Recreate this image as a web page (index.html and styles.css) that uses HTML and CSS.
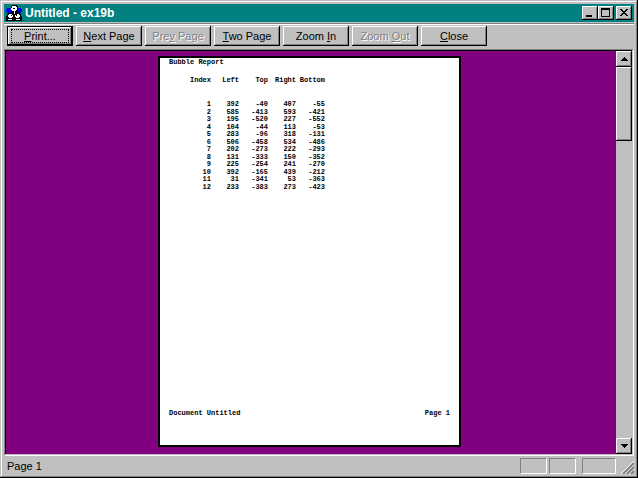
FILE: index.html
```html
<!DOCTYPE html>
<html lang="en">
<head>
<meta charset="utf-8">
<title>Untitled - ex19b</title>
<link rel="stylesheet" href="styles.css">
</head>
<body>
<div class="window">
  <header class="titlebar">
    <svg class="app-icon" viewBox="0 0 16 16" shape-rendering="crispEdges" aria-hidden="true">
      <path fill="#0000ff" d="M1 3h4v1h1v4H3v1H2V8H1V7H0V4h1zM11 3h4v1h1v3h-1v1h-1v1h-1V8h-3V4h1z"/>
      <path fill="#000" d="M5 1h1V0h5v1h1v6h2v2h1v2h1v5H0v-5h1V9h1V8h3z"/>
      <path fill="#fff" d="M6 1h4v1h1v3h-1v1H9v3H8V6H6V5H5V3h1zM3 9h3v1h1v2H6v1H3v-1H2v-2h1zM11 9h2v1h1v2h-1v1h-3v-1H9v-2h2zM2 14h4v1H2zM10 14h4v1h-4z"/>
      <path fill="#000" d="M7 3h2v1H7zM5 10h1v1H5zM10 10h1v1h-1z"/>
    </svg>
    <h1 class="title">Untitled - ex19b</h1>
    <div class="captions">
      <button class="caption bevel" aria-label="Minimize"><svg viewBox="0 0 12 10" shape-rendering="crispEdges"><path d="M2 7h6v2H2z"/></svg></button>
      <button class="caption bevel" aria-label="Maximize"><svg viewBox="0 0 12 10" shape-rendering="crispEdges"><path fill-rule="evenodd" d="M1 0h9v9H1zM2 2v6h7V2z"/></svg></button>
      <button class="caption bevel close" aria-label="Close window"><svg viewBox="0 0 12 10" shape-rendering="crispEdges"><path d="M2 1h2v1h1v1h2V2h1V1h2v1H9v1H8v1H7v1h1v1h1v1h1v1H8V7H7V6H5v1H4v1H2V7h1V6h1V5h1V4H4V3H3V2H2z"/></svg></button>
    </div>
  </header>
  <nav class="toolbar">
    <button class="tool bevel default"><span class="focus"><u>P</u>rint...</span></button>
    <button class="tool bevel"><u>N</u>ext Page</button>
    <button class="tool bevel" disabled>Pre<u>v</u> Page</button>
    <button class="tool bevel"><u>T</u>wo Page</button>
    <button class="tool bevel">Zoom <u>I</u>n</button>
    <button class="tool bevel" disabled>Zoom <u>O</u>ut</button>
    <button class="tool bevel"><u>C</u>lose</button>
  </nav>
  <main class="view">
    <div class="canvas">
      <article class="page">
        <h2 class="report-title">Bubble Report</h2>
        <table class="report">
          <colgroup><col class="c-index"><col class="c-odd"><col class="c-even"><col class="c-odd"><col class="c-even"></colgroup>
          <thead><tr><th>Index</th><th>Left</th><th>Top</th><th>Right</th><th>Bottom</th></tr></thead>
          <tbody>
            <tr><td>1</td><td>392</td><td>-40</td><td>407</td><td>-55</td></tr>
            <tr><td>2</td><td>585</td><td>-413</td><td>593</td><td>-421</td></tr>
            <tr><td>3</td><td>195</td><td>-520</td><td>227</td><td>-552</td></tr>
            <tr><td>4</td><td>104</td><td>-44</td><td>113</td><td>-53</td></tr>
            <tr><td>5</td><td>283</td><td>-96</td><td>318</td><td>-131</td></tr>
            <tr><td>6</td><td>506</td><td>-458</td><td>534</td><td>-486</td></tr>
            <tr><td>7</td><td>202</td><td>-273</td><td>222</td><td>-293</td></tr>
            <tr><td>8</td><td>131</td><td>-333</td><td>150</td><td>-352</td></tr>
            <tr><td>9</td><td>225</td><td>-254</td><td>241</td><td>-270</td></tr>
            <tr><td>10</td><td>392</td><td>-165</td><td>439</td><td>-212</td></tr>
            <tr><td>11</td><td>31</td><td>-341</td><td>53</td><td>-363</td></tr>
            <tr><td>12</td><td>233</td><td>-383</td><td>273</td><td>-423</td></tr>
          </tbody>
        </table>
        <footer class="page-footer"><span>Document Untitled</span><span>Page 1</span></footer>
      </article>
    </div>
    <div class="scrollbar">
      <button class="arrow bevel" aria-label="Scroll up"><svg viewBox="0 0 7 4" shape-rendering="crispEdges"><path d="M3 0h1v1h1v1h1v1h1v1H0V3h1V2h1V1h1z"/></svg></button>
      <div class="thumb bevel"></div>
      <button class="arrow bevel last" aria-label="Scroll down"><svg viewBox="0 0 7 4" shape-rendering="crispEdges"><path d="M0 0h7v1H6v1H5v1H4v1H3V3H2V2H1V1H0z"/></svg></button>
    </div>
  </main>
  <footer class="status">
    <span class="status-text">Page 1</span>
    <span class="pane"></span>
    <span class="pane"></span>
    <span class="pane wide"></span>
    <svg class="grip" viewBox="0 0 13 13" aria-hidden="true">
      <path stroke="#fff" d="M0 13L13 0M4 13l9-9M8 13l5-5"/>
      <path stroke="#808080" stroke-width="2" d="M2 13L13 2M6 13l7-7M10 13l3-3"/>
    </svg>
  </footer>
</div>
</body>
</html>
```
FILE: styles.css
```css
* { box-sizing: border-box; }

body {
  margin: 0;
  background: #c0c0c0;
  color: #000;
  font: 11px/14px "Liberation Sans", Arial, sans-serif;
}

button {
  margin: 0;
  padding: 0;
  border: 0;
  border-radius: 0;
  color: inherit;
  font: inherit;
}

.window {
  display: flex;
  flex-direction: column;
  min-height: 100vh;
  padding: 4px;
  background: #c0c0c0;
  box-shadow: inset -1px -1px #000, inset 1px 1px #c0c0c0, inset -2px -2px #808080, inset 2px 2px #fff;
}

.bevel {
  background: #c0c0c0;
  box-shadow: inset -1px -1px #000, inset 1px 1px #fff, inset -2px -2px #808080;
}

.titlebar {
  display: flex;
  align-items: center;
  height: 18px;
  padding: 0 2px;
  background: #008080;
  color: #fff;
}

.app-icon { width: 16px; height: 16px; }

.title {
  flex: 1;
  margin: 0 0 0 3px;
  font-size: 12px;
  line-height: 18px;
}

.captions { display: flex; }

.caption {
  display: flex;
  justify-content: center;
  width: 16px;
  height: 14px;
  padding-top: 2px;
}

.caption svg { width: 12px; height: 10px; }
.caption.close { margin-left: 2px; }

.toolbar {
  display: flex;
  gap: 3px;
  margin-top: 1px;
  padding: 2px 3px 3px;
  border-top: 1px solid #808080;
  box-shadow: inset 0 1px #fff;
}

.tool {
  width: 66px;
  height: 20px;
}

.tool.default {
  padding: 3px 4px;
  box-shadow: inset 0 0 0 1px #000, inset -2px -2px #000, inset 2px 2px #fff, inset -3px -3px #808080;
}

.focus {
  display: block;
  border: 1px dotted #000;
  line-height: 12px;
}

.tool:disabled { color: #808080; text-shadow: 1px 1px #fff; }

.view {
  display: flex;
  flex: 1;
  border: 1px solid;
  border-color: #808080 #fff #fff #808080;
  padding: 1px;
  background: linear-gradient(#000, #000) 0 0 / calc(100% - 1px) 1px no-repeat,
    linear-gradient(#000, #000) 0 0 / 1px calc(100% - 1px) no-repeat, #c0c0c0;
  background-origin: padding-box;
}

.canvas {
  display: flex;
  flex: 1;
  justify-content: center;
  padding: 5px 3px 7px 0;
  background: #800080;
}

.page {
  display: flex;
  flex-direction: column;
  aspect-ratio: 303 / 391;
  padding: 0 9px;
  border: 2px solid #000;
  background: #fff;
  font: bold 7px/8px "Liberation Mono", "Courier New", monospace;
}

.report-title {
  margin: 0;
  font-size: 7px;
}

.report {
  width: 156px;
  height: 114px;
  margin-top: 11px;
  border-collapse: collapse;
  table-layout: fixed;
}

.report th, .report td {
  padding: 0;
  line-height: 7px;
  text-align: right;
  white-space: nowrap;
}

.report th { height: 24px; font-weight: bold; vertical-align: top; }
.c-index { width: 42px; }
.c-odd { width: 28px; }
.c-even { width: 29px; }

.page-footer {
  display: flex;
  justify-content: space-between;
  margin: auto 0 28px;
}

.scrollbar {
  display: flex;
  flex-direction: column;
  width: 16px;
  background: #c0c0c0;
}

.arrow {
  display: flex;
  align-items: center;
  justify-content: center;
  height: 16px;
}

.arrow svg { width: 7px; height: 4px; }
.arrow.last { margin-top: auto; }
.thumb { height: 74px; }

.status {
  display: flex;
  align-items: flex-end;
  gap: 2px;
  height: 18px;
}

.status-text {
  flex: 1;
  padding-left: 3px;
  line-height: 16px;
}

.pane {
  width: 27px;
  height: 16px;
  border: 1px solid;
  border-color: #808080 #fff #fff #808080;
}

.pane.wide { width: 34px; margin-left: 4px; }
.grip { width: 13px; height: 13px; margin-left: 3px; }
```
